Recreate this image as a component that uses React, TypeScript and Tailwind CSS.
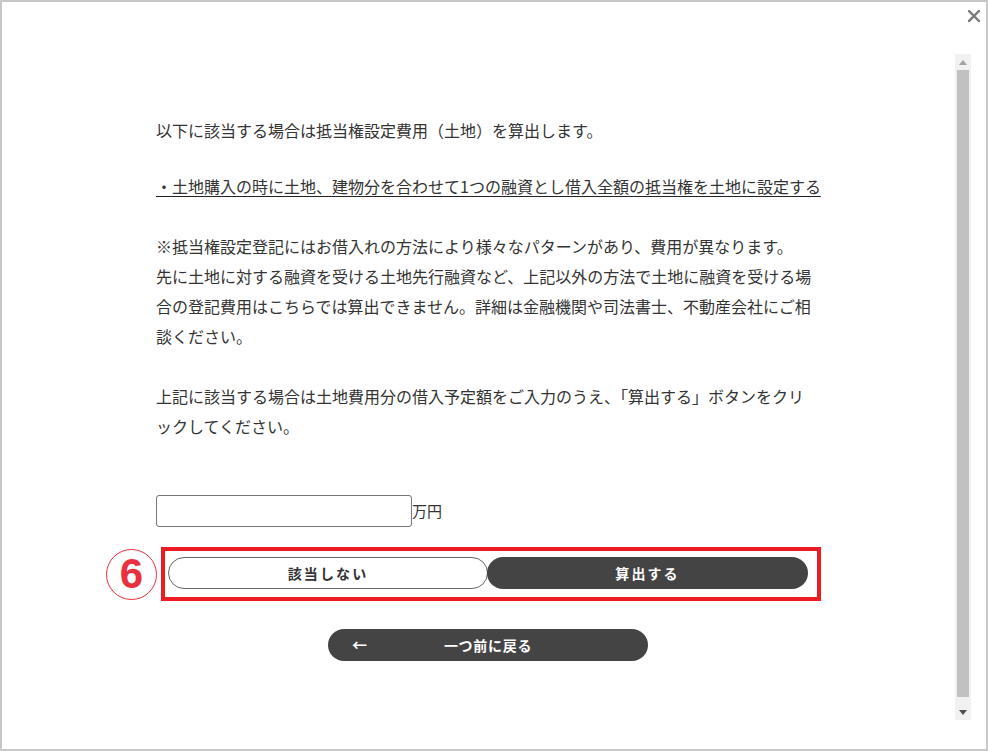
import React from 'react';

const font = { fontFamily: '"Noto Sans CJK JP", "Noto Sans", sans-serif' };

function CloseIcon() {
  return (
    <svg width="12" height="12" viewBox="0 0 12 12" className="block">
      <path d="M1 1 L11 11 M11 1 L1 11" stroke="#7a7a7a" strokeWidth="2.4" strokeLinecap="square" />
    </svg>
  );
}

function Scrollbar() {
  return (
    <div className="flex h-[666px] w-[16px] flex-col bg-[#f1f1f1]">
      <div className="flex h-[16px] items-center justify-center">
        <svg width="8" height="5" viewBox="0 0 8 5">
          <path d="M0 5 L4 0 L8 5 Z" fill="#a3a3a3" />
        </svg>
      </div>
      <div className="mx-[2px] h-[627px] bg-[#c1c1c1]" />
      <div className="flex flex-1 items-center justify-center pt-[8px]">
        <svg width="8" height="5" viewBox="0 0 8 5">
          <path d="M0 0 L8 0 L4 5 Z" fill="#505050" />
        </svg>
      </div>
    </div>
  );
}

export default function App() {
  return (
    <div
      className="relative flex h-[751px] w-[988px] flex-col border-2 border-[#c8c8c8] bg-white text-[#333]"
      style={font}
    >
      <div className="flex h-[52px] justify-end pr-[6px] pt-[8px]">
        <CloseIcon />
      </div>
      <div className="flex">
        <div className="flex-1 pl-[154px] pt-[61px]">
          <div className="w-[664px] whitespace-nowrap text-[16px] leading-[30px]">
            <p>以下に該当する場合は抵当権設定費用（土地）を算出します。</p>
            <p className="mt-[26px] underline decoration-[#222] underline-offset-[3px]">
              ・土地購入の時に土地、建物分を合わせて1つの融資とし借入全額の抵当権を土地に設定する
            </p>
            <p className="mt-[30px]">
              ※抵当権設定登記にはお借入れの方法により様々なパターンがあり、費用が異なります。
              <br />
              先に土地に対する融資を受ける土地先行融資など、上記以外の方法で土地に融資を受ける場
              <br />
              合の登記費用はこちらでは算出できません。詳細は金融機関や司法書士、不動産会社にご相
              <br />
              談ください。
            </p>
            <p className="mt-[30px]">
              上記に該当する場合は土地費用分の借入予定額をご入力のうえ、「算出する」ボタンをクリ
              <br />
              ックしてください。
            </p>
          </div>

          <div className="mt-[54px] flex items-center">
            <input
              type="text"
              className="h-[32px] w-[256px] rounded-[3px] border border-[#767676] bg-white px-2 text-[15px] outline-none"
            />
            <span className="text-[15px] leading-[32px]">万円</span>
          </div>

          <div className="-ml-[50px] mt-[20px] flex items-center">
            <div className="flex h-[51px] w-[51px] items-center justify-center rounded-full border-[1.5px] border-[#e8303e]">
              <span
                className="text-[42px] font-bold leading-none text-[#e8303e]"
                style={{ fontFamily: '"Liberation Sans", Arial, sans-serif' }}
              >
                6
              </span>
            </div>
            <div className="ml-[4px] flex h-[54px] w-[660px] items-center border-4 border-[#ed1c24] pl-[3px] pb-[2px]">
              <button className="h-[32px] w-[320px] rounded-full border border-[#666] bg-white text-[14px] font-bold tracking-[0.15em] text-[#333]">
                該当しない
              </button>
              <button className="-ml-[1px] h-[32px] w-[321px] rounded-full bg-[#444] text-[14px] font-bold tracking-[0.15em] text-white">
                算出する
              </button>
            </div>
          </div>

          <div className="mt-[28px] flex w-[664px] justify-center">
            <button className="relative h-[32px] w-[320px] rounded-full bg-[#444] text-[14px] font-bold tracking-[0.05em] text-white">
              <span className="absolute left-[24px] top-1/2 -translate-y-1/2 text-[15px]">←</span>
              一つ前に戻る
            </button>
          </div>
        </div>
        <div className="mr-[15px]">
          <Scrollbar />
        </div>
      </div>
    </div>
  );
}
